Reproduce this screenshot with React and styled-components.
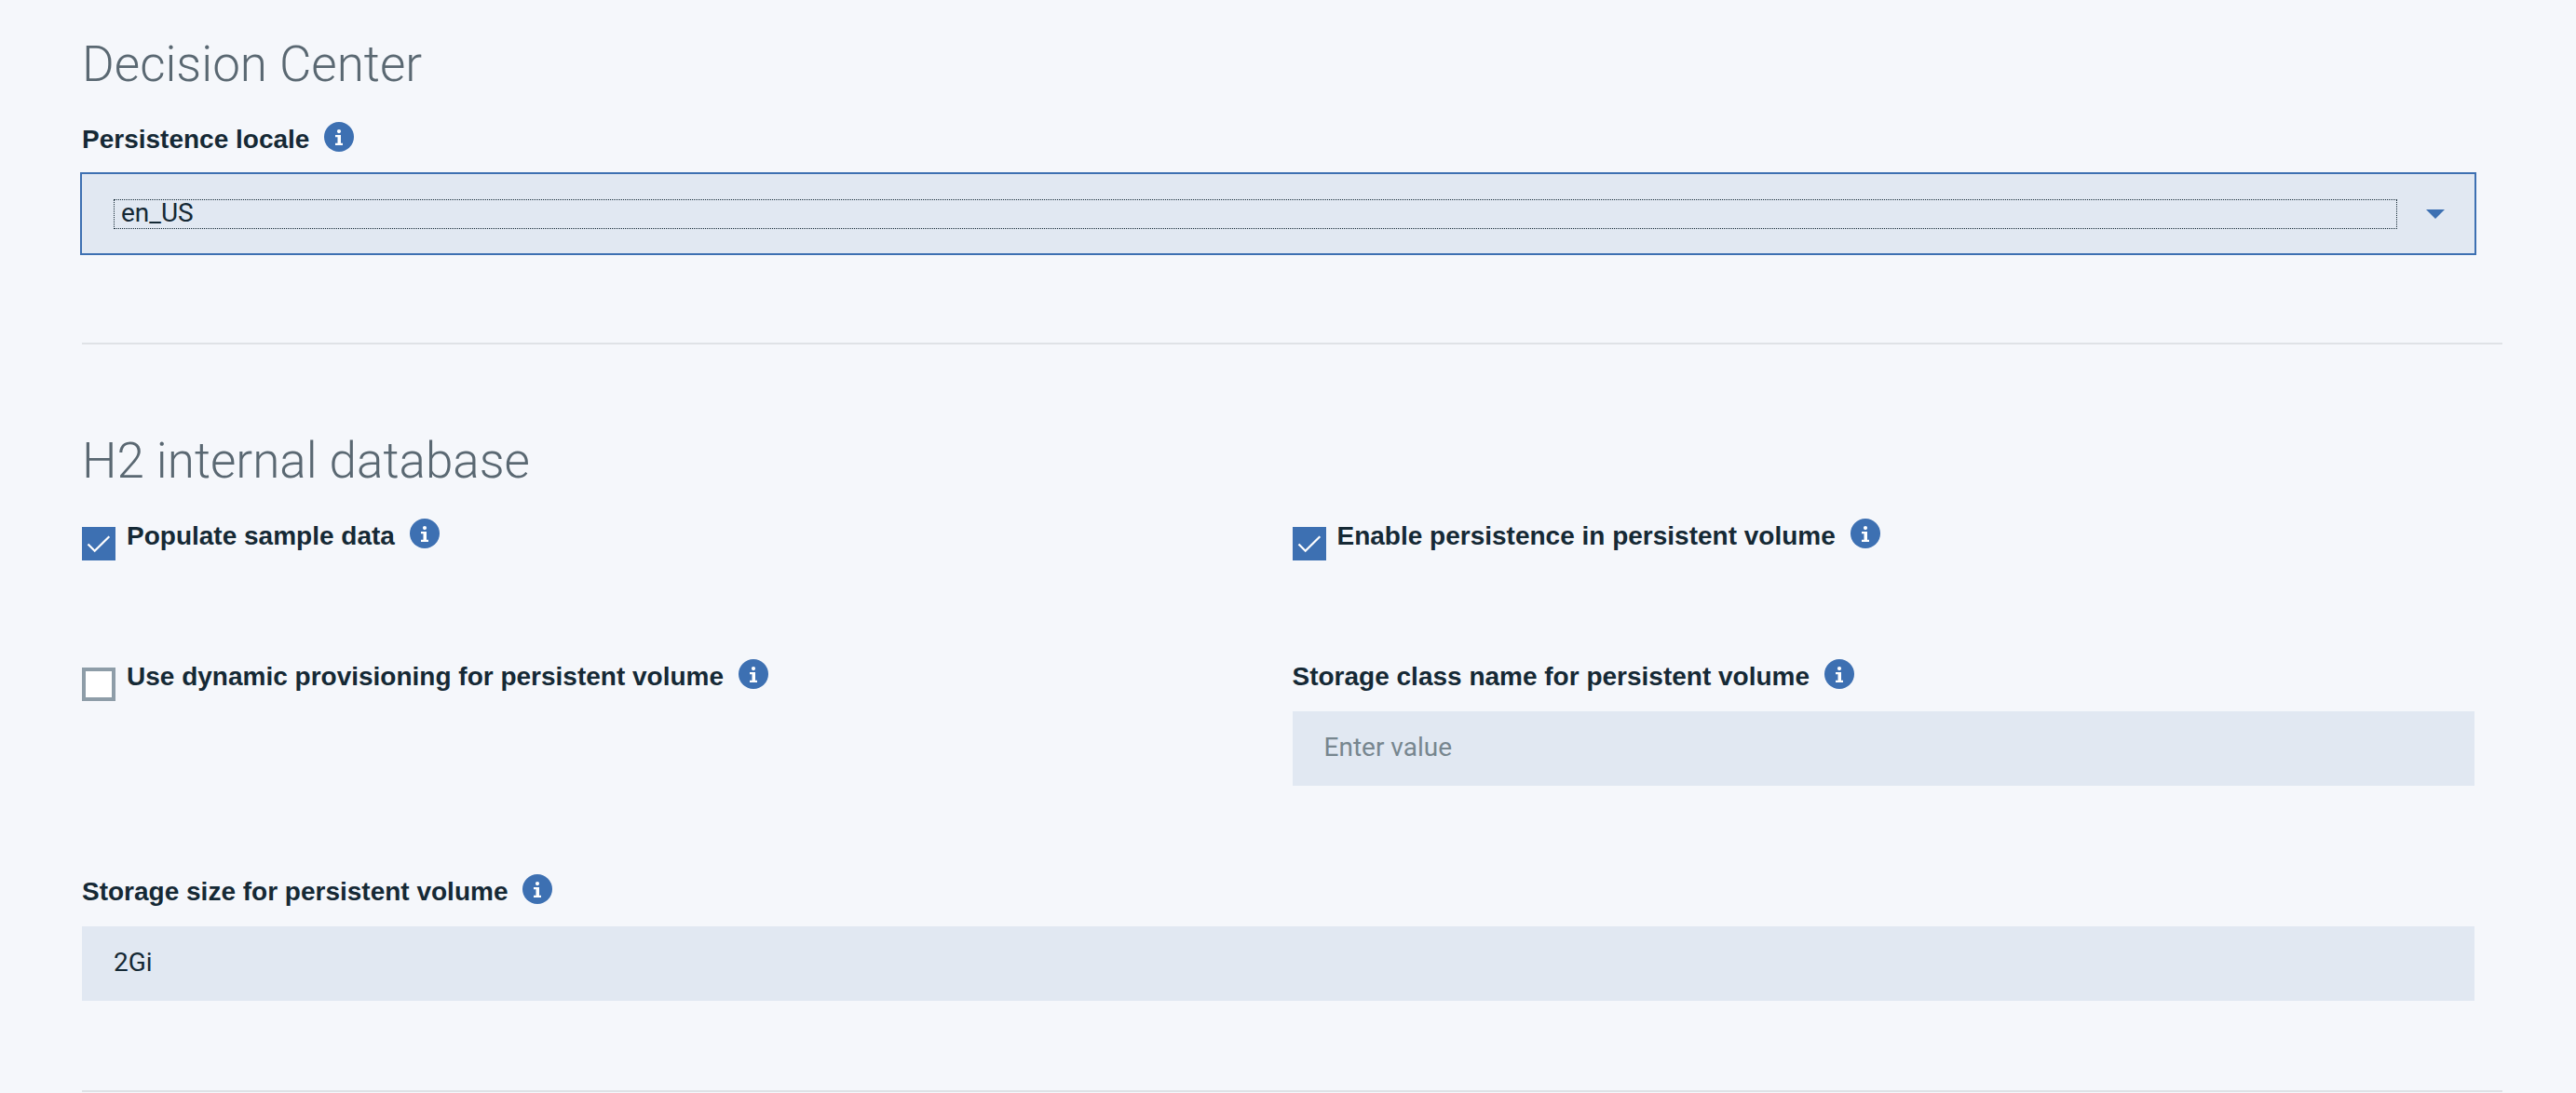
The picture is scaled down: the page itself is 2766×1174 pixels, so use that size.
import React, { useState } from "react";
import styled, { createGlobalStyle } from "styled-components";

const color = {
  page: "#f5f7fb",
  field: "#e1e8f2",
  brand: "#3d70b2",
  ink: "#152935",
  heading: "#5a6872",
  hint: "#77868f",
  rule: "#dfe2e6",
  boxEdge: "#8e9da8",
};

const bodyFont = `Roboto, "Liberation Sans", sans-serif`;
const labelFont = `"Liberation Sans", Arial, sans-serif`;

const GlobalStyle = createGlobalStyle`
  *, *::before, *::after { box-sizing: border-box; }
  body { margin: 0; background: ${color.page}; color: ${color.ink}; font-family: ${bodyFont}; }
`;

const Page = styled.main`
  padding: 0 79px 0 88px;
`;

const Section = styled.section`
  padding: ${(p) => (p.$first ? 37 : 93)}px 0 96px;
  border-bottom: 2px solid ${color.rule};
`;

const Title = styled.h2`
  margin: 0 0 30px;
  font-size: 53px;
  line-height: 64px;
  font-weight: 300;
  color: ${color.heading};
`;

const Grid = styled.div`
  display: grid;
  grid-template-columns: 1fr 1fr;
  row-gap: 95px;
`;

const Cell = styled.div`
  grid-column: ${(p) => (p.$wide ? "1 / -1" : "auto")};
  padding-right: 30px;
`;

const LabelRow = styled.div`
  display: flex;
  align-items: flex-start;
  height: 38px;
  margin-bottom: 18px;
`;

const Label = styled.label`
  font-family: ${labelFont};
  font-size: 28px;
  line-height: 38px;
  font-weight: 700;
`;

const InfoButton = styled.button`
  display: block;
  flex: none;
  margin: 0 0 0 16px;
  padding: 0;
  border: 0;
  background: none;
  cursor: pointer;

  svg { display: block; }
`;

const TextInput = styled.input`
  display: block;
  width: 100%;
  height: 80px;
  padding: 0 34px 4px;
  border: 0;
  border-radius: 0;
  background: ${color.field};
  color: ${color.ink};
  font-family: ${bodyFont};
  font-size: 28px;
  font-weight: 400;

  &::placeholder { color: ${color.hint}; opacity: 1; }
`;

const SelectBox = styled.div`
  display: flex;
  align-items: center;
  gap: 31px;
  height: 85px;
  padding: 0 32px 0 34px;
  background: ${color.field};
  outline: 2px solid ${color.brand};
`;

const Select = styled.select`
  appearance: none;
  flex: 1;
  min-width: 0;
  height: 32px;
  padding: 0 7px 2px;
  border: 1px dotted ${color.ink};
  border-radius: 0;
  outline: 0;
  background: transparent;
  color: ${color.ink};
  font-family: ${bodyFont};
  font-size: 28px;
  line-height: 28px;
  font-weight: 400;
`;

const CheckHolder = styled.span`
  position: relative;
  flex: none;
  width: 36px;
  height: 36px;
  margin: 9px 12px 0 0;

  svg { position: absolute; inset: 0; pointer-events: none; }
`;

const CheckInput = styled.input`
  appearance: none;
  display: block;
  width: 36px;
  height: 36px;
  margin: 0;
  border: 4px solid ${color.boxEdge};
  background: #fff;

  &:checked { border-color: ${color.brand}; background: ${color.brand}; }
`;

function Info({ about }) {
  return (
    <InfoButton type="button" aria-label={`About ${about}`}>
      <svg width="32" height="32" viewBox="0 0 32 32" aria-hidden="true">
        <circle cx="16" cy="16" r="16" fill={color.brand} />
        <circle cx="16" cy="10.1" r="2.1" fill="#fff" />
        <path d="M12 14h6v8.7h2V25h-8v-2.3h2.5v-6.4H12z" fill="#fff" />
      </svg>
    </InfoButton>
  );
}

function TextField({ id, label, wide, placeholder, initial = "" }) {
  const [value, setValue] = useState(initial);
  return (
    <Cell $wide={wide}>
      <LabelRow>
        <Label htmlFor={id}>{label}</Label>
        <Info about={label} />
      </LabelRow>
      <TextInput id={id} type="text" value={value} placeholder={placeholder} onChange={(e) => setValue(e.target.value)} />
    </Cell>
  );
}

function CheckField({ id, label, initial = false }) {
  const [checked, setChecked] = useState(initial);
  return (
    <Cell>
      <LabelRow>
        <CheckHolder>
          <CheckInput id={id} type="checkbox" checked={checked} onChange={(e) => setChecked(e.target.checked)} />
          {checked && (
            <svg width="36" height="36" viewBox="0 0 36 36" aria-hidden="true">
              <path d="M6.5 18.5l7.2 7.3L29.3 10.2" fill="none" stroke="#fff" strokeWidth="2.2" />
            </svg>
          )}
        </CheckHolder>
        <Label htmlFor={id}>{label}</Label>
        <Info about={label} />
      </LabelRow>
    </Cell>
  );
}

export default function App() {
  return (
    <>
      <GlobalStyle />
      <Page>
        <Section $first>
          <Title>Decision Center</Title>
          <Cell>
            <LabelRow>
              <Label htmlFor="locale">Persistence locale</Label>
              <Info about="Persistence locale" />
            </LabelRow>
            <SelectBox>
              <Select id="locale" defaultValue="en_US">
                <option value="en_US">en_US</option>
              </Select>
              <svg width="20" height="10" viewBox="0 0 20 10" aria-hidden="true">
                <path d="M0 0h20L10 10z" fill={color.brand} />
              </svg>
            </SelectBox>
          </Cell>
        </Section>
        <Section>
          <Title>H2 internal database</Title>
          <Grid>
            <CheckField id="sample" label="Populate sample data" initial />
            <CheckField id="persist" label="Enable persistence in persistent volume" initial />
            <CheckField id="dynamic" label="Use dynamic provisioning for persistent volume" />
            <TextField id="storage-class" label="Storage class name for persistent volume" placeholder="Enter value" />
            <TextField id="storage-size" label="Storage size for persistent volume" initial="2Gi" wide />
          </Grid>
        </Section>
      </Page>
    </>
  );
}
